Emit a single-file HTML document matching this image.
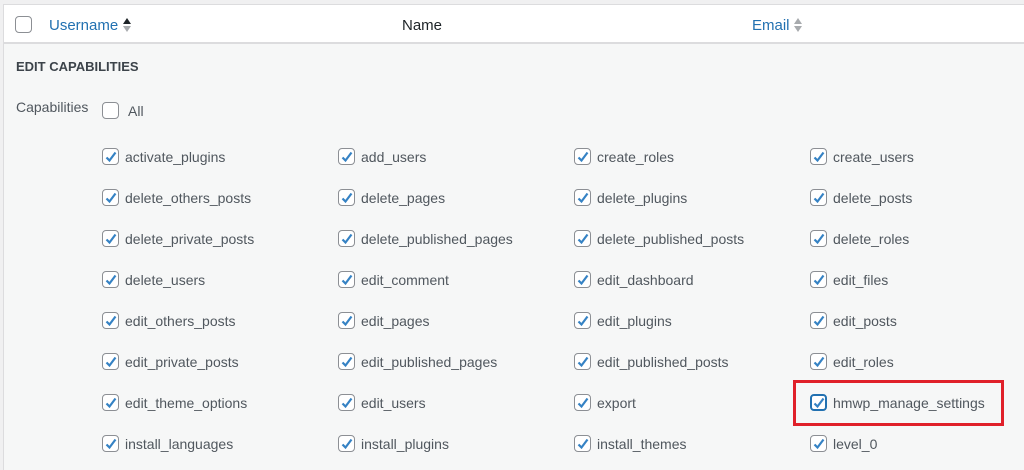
<!DOCTYPE html>
<html><head><meta charset="utf-8"><style>
*{margin:0;padding:0;box-sizing:border-box}
html,body{width:1024px;height:470px;overflow:hidden}
body{background:#f0f0f1;position:relative;font-family:"Liberation Sans",sans-serif;}
#wrap{position:absolute;left:3px;top:4px;width:1021px;height:466px;border-left:1px solid #dcdcde;border-top:1px solid #dcdcde;background:#f6f7f7}
#head{position:absolute;left:0;top:0;right:0;height:39px;background:#fff;border-bottom:2px solid #dcdcde}
.cb{position:absolute;width:17px;height:17px;border:1px solid #8c8f94;border-radius:4px;background:#fff}
.cb svg{position:absolute;left:1px;top:1px}
.t{position:absolute;font-size:14px;color:#50575e;white-space:nowrap;line-height:16px}
.h{position:absolute;font-size:15px;top:12px;line-height:18px}
.arr{position:absolute;width:0;height:0;border-left:4px solid transparent;border-right:4px solid transparent}
</style></head><body>
<div id="wrap">
<div id="head">
<div class="cb" style="left:11px;top:11px"></div>
<div class="h" style="left:45px;color:#2271b1">Username</div>
<div class="arr" style="left:119px;top:13px;border-bottom:6px solid #1d2327"></div>
<div class="arr" style="left:119px;top:21px;border-top:6px solid #a7aaad"></div>
<div class="h" style="left:398px;color:#1d2327">Name</div>
<div class="h" style="left:748px;color:#2271b1">Email</div>
<div class="arr" style="left:790px;top:13px;border-bottom:6px solid #a7aaad"></div>
<div class="arr" style="left:790px;top:21px;border-top:6px solid #a7aaad"></div>
</div>
</div>
<div class="t" style="left:16px;top:59px;font-weight:bold;font-size:13px;color:#3c434a">EDIT CAPABILITIES</div>
<div class="t" style="left:16px;top:99px">Capabilities</div>
<div class="cb" style="left:102px;top:102px"></div>
<div class="t" style="left:128px;top:103px">All</div>
<div id="caps"></div>
<div style="position:absolute;left:793px;top:380px;width:211px;height:46px;border:3px solid #e0202a"></div>
<script>
var names=[["activate_plugins","add_users","create_roles","create_users"],["delete_others_posts","delete_pages","delete_plugins","delete_posts"],["delete_private_posts","delete_published_pages","delete_published_posts","delete_roles"],["delete_users","edit_comment","edit_dashboard","edit_files"],["edit_others_posts","edit_pages","edit_plugins","edit_posts"],["edit_private_posts","edit_published_pages","edit_published_posts","edit_roles"],["edit_theme_options","edit_users","export","hmwp_manage_settings"],["install_languages","install_plugins","install_themes","level_0"]];
var xs=[102,338,574,810],h="";
names.forEach(function(r,i){var y=148+i*41;r.forEach(function(n,j){
var hl=(i==6&&j==3);
h+='<div class="cb" style="left:'+xs[j]+'px;top:'+y+'px;'+(hl?'border:2px solid #2271b1':'')+'"><svg width="14" height="14" viewBox="0 0 14 14" style="'+(hl?'left:0;top:0':'')+'"><path d="M2.5 7.5 L5.5 10.5 L11.5 2.5" fill="none" stroke="#3582c4" stroke-width="2.2"/></svg></div>';
h+='<div class="t" style="left:'+(xs[j]+23)+'px;top:'+(y+1)+'px">'+n+'</div>';});});
document.getElementById("caps").innerHTML=h;
</script>
</body></html>
